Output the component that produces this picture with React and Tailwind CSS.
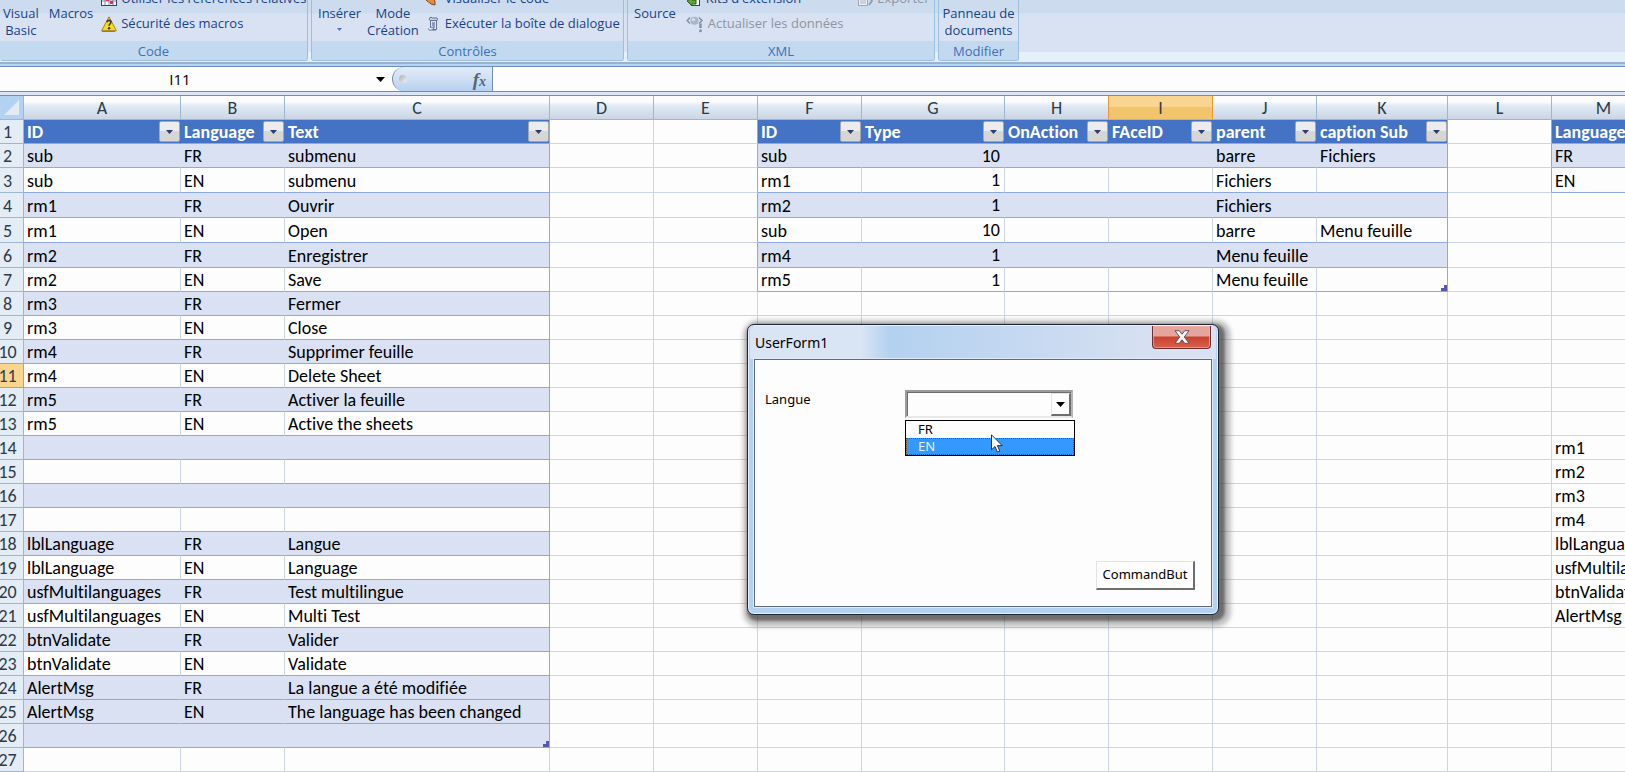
import React from "react";

const COLUMNS = [
  { id: "A", width: 157 },
  { id: "B", width: 104 },
  { id: "C", width: 265 },
  { id: "D", width: 104 },
  { id: "E", width: 104 },
  { id: "F", width: 104 },
  { id: "G", width: 143 },
  { id: "H", width: 104 },
  { id: "I", width: 104 },
  { id: "J", width: 104 },
  { id: "K", width: 131 },
  { id: "L", width: 104 },
  { id: "M", width: 104 },
];

const TABLES = [
  { first: "A", last: "C", rows: 26, plain: (r) => r % 2 === 1 && r !== 25 },
  { first: "F", last: "K", rows: 7, plain: (r) => r % 2 === 1 },
  { first: "M", last: "M", rows: 3, plain: (r) => r % 2 === 1 },
];

const CELLS = {
  1: { A: "ID", B: "Language", C: "Text", F: "ID", G: "Type", H: "OnAction", I: "FAceID", J: "parent", K: "caption Sub", M: "Language" },
  2: { A: "sub", B: "FR", C: "submenu", F: "sub", G: "10", J: "barre", K: "Fichiers", M: "FR" },
  3: { A: "sub", B: "EN", C: "submenu", F: "rm1", G: "1", J: "Fichiers", M: "EN" },
  4: { A: "rm1", B: "FR", C: "Ouvrir", F: "rm2", G: "1", J: "Fichiers" },
  5: { A: "rm1", B: "EN", C: "Open", F: "sub", G: "10", J: "barre", K: "Menu feuille" },
  6: { A: "rm2", B: "FR", C: "Enregistrer", F: "rm4", G: "1", J: "Menu feuille" },
  7: { A: "rm2", B: "EN", C: "Save", F: "rm5", G: "1", J: "Menu feuille" },
  8: { A: "rm3", B: "FR", C: "Fermer" },
  9: { A: "rm3", B: "EN", C: "Close" },
  10: { A: "rm4", B: "FR", C: "Supprimer feuille" },
  11: { A: "rm4", B: "EN", C: "Delete Sheet" },
  12: { A: "rm5", B: "FR", C: "Activer la feuille" },
  13: { A: "rm5", B: "EN", C: "Active the sheets" },
  14: { M: "rm1" },
  15: { M: "rm2" },
  16: { M: "rm3" },
  17: { M: "rm4" },
  18: { A: "lblLanguage", B: "FR", C: "Langue", M: "lblLanguage" },
  19: { A: "lblLanguage", B: "EN", C: "Language", M: "usfMultilanguages" },
  20: { A: "usfMultilanguages", B: "FR", C: "Test multilingue", M: "btnValidate" },
  21: { A: "usfMultilanguages", B: "EN", C: "Multi Test", M: "AlertMsg" },
  22: { A: "btnValidate", B: "FR", C: "Valider" },
  23: { A: "btnValidate", B: "EN", C: "Validate" },
  24: { A: "AlertMsg", B: "FR", C: "La langue a été modifiée" },
  25: { A: "AlertMsg", B: "EN", C: "The language has been changed" },
};

const ROWS = Array.from({ length: 27 }, (_, i) => i + 1);

function tableAt(col, row) {
  return TABLES.find((t) => col >= t.first && col <= t.last && row <= t.rows);
}

function FilterButton({ name }) {
  return (
    <button
      type="button"
      aria-label={`Filtrer ${name}`}
      className="flex h-[21px] w-[21px] shrink-0 items-center justify-center rounded-[2px] border border-[#a3a8b0] bg-linear-to-b from-[#ececec] from-50% to-[#d6d6d4] to-50%"
    >
      <svg width="7" height="4" viewBox="0 0 7 4" aria-hidden="true">
        <path d="M0 0h7L3.5 4z" fill="#2b3a78" />
      </svg>
    </button>
  );
}

function Cell({ col, row }) {
  const text = CELLS[row]?.[col];
  const table = tableAt(col, row);
  const next = String.fromCharCode(col.charCodeAt(0) + 1);
  const nextTable = tableAt(next, row);
  const header = table && row === 1;
  const banded = table && !header && !table.plain(row);

  let right = "border-r-[#ccd5e6]";
  if (table && col === table.last) right = "border-r-[#8ea9db]";
  else if (!table && nextTable) right = "border-r-[#8ea9db]";
  else if (header) right = "border-r-[#4472c4]";
  else if (banded) right = "border-r-[#d9e1f2]";

  const bottom = table ? "border-b-[#8ea9db]" : "border-b-[#ccd5e6]";
  const bg = header ? "bg-[#4472c4]" : banded ? "bg-[#d9e1f2]" : "bg-[#fdfdfd]";
  const corner = table && table.rows === row && col === table.last && col !== "M";
  const base = `relative border-r border-b ${right} ${bottom} ${bg}`;

  if (header) {
    return (
      <th className={`${base} p-0 text-left font-bold text-white`}>
        <div className="flex h-[23px] items-center justify-between pl-[3px]">
          <span className="pt-[2px] leading-[21px] whitespace-nowrap">{text}</span>
          <FilterButton name={text} />
        </div>
      </th>
    );
  }
  return (
    <td className={`${base} pt-[2px] pb-0 ${col === "G" ? "pr-1 pl-0 text-right align-top" : "pr-0 pl-[3px] align-bottom"} leading-[21px] whitespace-nowrap text-black`}>
      {text}
      {corner && (
        <svg className="absolute right-0 bottom-0" width="6" height="6" viewBox="0 0 6 6" aria-hidden="true">
          <path d="M3 0h3v6H0V3h3z" fill="#5457b5" />
        </svg>
      )}
    </td>
  );
}

function Sheet() {
  return (
    <table className="w-[1656px] table-fixed border-separate border-spacing-0 font-['Carlito','Lato','Open_Sans',sans-serif] text-[18px] [font-variant-ligatures:none]">
      <colgroup>
        <col style={{ width: 24 }} />
        {COLUMNS.map((c) => (
          <col key={c.id} style={{ width: c.width }} />
        ))}
      </colgroup>
      <thead>
        <tr className="h-6">
          <th aria-label="Tout sélectionner" className="border-r border-b border-[#9eb6ce] bg-[#b3d1f0] p-0">
            <svg className="ml-1" width="16" height="16" viewBox="0 0 16 16" aria-hidden="true">
              <path d="M15 0v15H0z" fill="#e2eaf4" />
            </svg>
          </th>
          {COLUMNS.map((c) => (
            <th
              key={c.id}
              scope="col"
              className={
                c.id === "I"
                  ? "border-r border-b border-r-[#f29436] border-b-[#9eb6ce] bg-linear-to-b from-[#f9d58f] from-50% to-[#f2c56c] to-50% px-0 pt-[2px] pb-0 leading-[21px] font-normal text-[#333c4a]"
                  : c.id === "H"
                    ? "border-r border-b border-r-[#f29436] border-b-[#9eb6ce] bg-linear-to-b from-[#fcfcfc] from-25% via-[#e2ecf6] via-40% to-[#cbd5e4] px-0 pt-[2px] pb-0 leading-[21px] font-normal text-[#2c3b4a]"
                    : "border-r border-b border-[#9eb6ce] bg-linear-to-b from-[#fcfcfc] from-25% via-[#e2ecf6] via-40% to-[#cbd5e4] px-0 pt-[2px] pb-0 leading-[21px] font-normal text-[#2c3b4a]"
              }
            >
              {c.id}
            </th>
          ))}
        </tr>
      </thead>
      <tbody>
        {ROWS.map((r) => (
          <tr key={r} className={r >= 3 && r <= 6 ? "h-[25px]" : "h-6"}>
            <th
              scope="row"
              className={
                r === 11
                  ? "border-r border-b border-[#f29436] bg-[#f9d58f] px-0 pt-[2px] pb-0 align-bottom leading-[21px] font-normal text-[#333c4a]"
                  : r === 10
                    ? "border-r border-b border-r-[#9eb6ce] border-b-[#f29436] bg-[#e4ecf5] px-0 pt-[2px] pb-0 align-bottom leading-[21px] font-normal text-[#2c3b4a]"
                    : "border-r border-b border-[#9eb6ce] bg-[#e4ecf5] px-0 pt-[2px] pb-0 align-bottom leading-[21px] font-normal text-[#2c3b4a]"
              }
            >
              <div className="flex justify-center pr-2">{r}</div>
            </th>
            {COLUMNS.map((c) => (
              <Cell key={c.id} col={c.id} row={r} />
            ))}
          </tr>
        ))}
      </tbody>
    </table>
  );
}

function GridIcon() {
  return (
    <svg width="16" height="16" viewBox="0 0 16 16" aria-hidden="true">
      <rect x="0.5" y="1.5" width="15" height="13" fill="#fff" stroke="#3a4468" />
      <path d="M1 6h14M1 10h14M4 2v12M8 2v12M12 2v12" stroke="#7d87a5" />
      <path d="M5 7h3v3H5zM9 10h3v3H9z" fill="#d4316a" />
    </svg>
  );
}

function WarningIcon() {
  return (
    <svg width="16" height="16" viewBox="0 0 16 16" aria-hidden="true">
      <path d="M8 0.8 15.4 14.8H.6z" fill="#f7dc1c" stroke="#a8841a" strokeLinejoin="round" />
      <path d="M14 15.3H1" stroke="#8a6a1c" />
      <path d="M6.2 6.2c0-2.400 3.700-2.400 3.700 0 0 1.600-1.800 1.600-1.800 3.600" stroke="#3b3b36" strokeWidth="1.6" fill="none" />
      <circle cx="8.1" cy="12.2" r="1.2" fill="#3b3b36" />
    </svg>
  );
}

function CodeViewIcon() {
  return (
    <svg width="16" height="16" viewBox="0 0 16 16" aria-hidden="true">
      <path d="M1 9l4-4 5 5v4l-4-1z" fill="#e88b3c" stroke="#7c4a2c" />
    </svg>
  );
}

function ScrollIcon() {
  return (
    <svg width="16" height="16" viewBox="0 0 16 16" aria-hidden="true">
      <path d="M5.500 4.500h6v9h-4c2-1 1-3-2-2z" fill="#dfe8f5" stroke="#5d6f92" />
      <path d="M5.500 4.500a1.800 1.600 0 1 1 2-2.500h4.500a1.500 1.500 0 0 1 0 2.500z" fill="#c5d2e6" stroke="#5d6f92" />
      <path d="M7 7h3M7 9h3M8 11h2" stroke="#3e5078" />
      <path d="M3.500 12.500c0 2 2 2 3 1.500h4.500" fill="none" stroke="#5d6f92" />
    </svg>
  );
}

function KitIcon() {
  return (
    <svg width="16" height="16" viewBox="0 0 16 16" aria-hidden="true">
      <rect x="5.500" y="3.500" width="8" height="11" fill="#fff" stroke="#343f5c" />
      <path d="M1 10l5-3v2h4v4H6v2z" fill="#5fa52f" stroke="#2b5a1a" />
    </svg>
  );
}

function RefreshIcon() {
  return (
    <svg width="18" height="18" viewBox="0 0 18 18" aria-hidden="true">
      <path d="M4 2.500 1.200 5.500 4 8.500M13 2.500l3 3-3 3" fill="none" stroke="#7e8ea8" strokeWidth="1.400" />
      <circle cx="8.500" cy="5.800" r="4" fill="#a9b6c9" />
      <circle cx="7.500" cy="4.700" r="1.600" fill="#d6deea" />
      <path d="M14.500 8.500v4.500" stroke="#8494b0" strokeWidth="2.600" />
      <circle cx="14.500" cy="15.800" r="1.500" fill="#8494b0" />
    </svg>
  );
}

function ExportIcon() {
  return (
    <svg width="16" height="16" viewBox="0 0 16 16" aria-hidden="true">
      <path d="M1.500 2.500h9v12h-9z" fill="#eef1f6" stroke="#9aa3b3" />
      <path d="M3 8h6M3 10h6M3 12h6" stroke="#a9b1bf" />
      <path d="M12 14l3-4-3-4" fill="none" stroke="#8a94a6" strokeWidth="1.500" />
    </svg>
  );
}

function BigButton({ lines, arrow }) {
  return (
    <button type="button" className="flex flex-col items-center pt-[5px] leading-[17px] whitespace-nowrap">
      {lines.map((l) => (
        <span key={l}>{l}</span>
      ))}
      {arrow && (
        <svg className="mt-1.5" width="5" height="3" viewBox="0 0 5 3" aria-hidden="true">
          <path d="M0 0h5L2.500 3z" fill="#5473b5" />
        </svg>
      )}
    </button>
  );
}

function SmallButton({ icon, label, disabled }) {
  return (
    <button
      type="button"
      disabled={disabled}
      className="flex h-[25px] shrink-0 items-center gap-1 whitespace-nowrap text-[#15428b] disabled:text-[#8f959f]"
    >
      {icon}
      <span>{label}</span>
    </button>
  );
}

function Group({ title, className, children }) {
  return (
    <section
      aria-label={title}
      className={`flex h-[61px] shrink-0 flex-col overflow-hidden rounded-b-[3px] border-x border-b border-[#9abfdf] bg-[#d9e2f3] ${className}`}
    >
      <div className="flex h-[41px] shrink-0 items-stretch bg-linear-to-b from-[#cddbee] from-25% via-[#c8dcf0] via-30% to-[#d9e2f3] to-35%">{children}</div>
      <h2 className="h-[19px] bg-[#c3d9f0] text-center leading-[20px] text-[#3f6fb4]">{title}</h2>
    </section>
  );
}

function Ribbon() {
  return (
    <div className="flex h-[62px] gap-[3px] overflow-hidden bg-[linear-gradient(to_bottom,#cddbee_10px,#c5dbf0_12px,#d9e2f3_14px,#d9e2f3_52px,#e4f1fb_52px)] font-['Open_Sans',sans-serif] text-[13px] text-[#15428b]">
      <Group title="Code" className="w-[308px] border-l-0">
        <div className="flex gap-2.5 pl-[3px]">
          <BigButton lines={["Visual", "Basic"]} />
          <BigButton lines={["Macros"]} />
        </div>
        <div className="flex flex-col justify-end pb-[5px] pl-2">
          <SmallButton icon={<GridIcon />} label="Utiliser les références relatives" />
          <SmallButton icon={<WarningIcon />} label="Sécurité des macros" />
        </div>
      </Group>
      <Group title="Contrôles" className="w-[313px]">
        <div className="flex gap-1.5 pl-1.5">
          <BigButton lines={["Insérer"]} arrow />
          <BigButton lines={["Mode", "Création"]} />
        </div>
        <div className="flex flex-col justify-end pb-[5px] pl-1.5">
          <SmallButton icon={<CodeViewIcon />} label="Visualiser le code" />
          <SmallButton icon={<ScrollIcon />} label="Exécuter la boîte de dialogue" />
        </div>
      </Group>
      <Group title="XML" className="w-[308px]">
        <div className="flex pl-1.5">
          <BigButton lines={["Source"]} />
        </div>
        <div className="flex flex-col justify-end pb-[5px] pl-2.5">
          <div className="flex justify-between gap-14">
            <SmallButton icon={<KitIcon />} label="Kits d'extension" />
            <SmallButton icon={<ExportIcon />} label="Exporter" disabled />
          </div>
          <SmallButton icon={<RefreshIcon />} label="Actualiser les données" disabled />
        </div>
      </Group>
      <Group title="Modifier" className="w-[81px]">
        <div className="flex flex-1 justify-center">
          <BigButton lines={["Panneau de", "documents"]} />
        </div>
      </Group>
    </div>
  );
}

function FormulaBar() {
  return (
    <div className="border-t-2 border-[#9db0d0] bg-linear-to-b from-[#b9d3f0] from-50% to-[#dbe5f4] to-50% pt-[2px] pb-[3px]">
      <div className="flex h-[26px] border-y border-[#6a8fb8] bg-[#fdfdfd]">
        <div className="flex w-[392px] items-center">
          <input
            aria-label="Zone Nom"
            defaultValue="I11"
            className="w-[372px] bg-transparent pr-3 text-center font-['Open_Sans',sans-serif] text-[15px] text-black outline-none"
          />
          <button type="button" aria-label="Liste des noms" className="flex w-4 justify-center">
            <svg width="9" height="5" viewBox="0 0 9 5" aria-hidden="true">
              <path d="M0 0h9L4.500 5z" fill="#000" />
            </svg>
          </button>
        </div>
        <div className="flex w-[101px] items-center justify-between rounded-l-[12px] border-r border-l border-[#6a8fb8] bg-linear-to-b from-[#e3ecf8] via-[#cfdff3] via-50% to-[#b5d2f2] pr-1.5 pl-1.5">
          <span className="h-2 w-2 rounded-full bg-linear-to-br from-[#a9aeb5] to-[#f4f5f7]" />
          <button
            type="button"
            aria-label="Insérer une fonction"
            className="font-['Liberation_Serif',serif] text-[19px] leading-none font-bold text-[#5b6475] italic"
          >
            f<span className="text-[14px]">x</span>
          </button>
        </div>
        <input aria-label="Barre de formule" className="min-w-0 flex-1 bg-transparent px-2 outline-none" />
      </div>
    </div>
  );
}

function Pointer() {
  return (
    <svg className="absolute top-[13px] left-[85px]" width="12" height="19" viewBox="0 0 12 19" aria-hidden="true">
      <path d="M.5.800v15l3.500-3.300 2.400 5.600 2.400-1-2.400-5.500h4.800z" fill="#fff" stroke="#26304a" />
    </svg>
  );
}

function UserForm() {
  return (
    <div
      role="dialog"
      aria-label="UserForm1"
      className="absolute top-[228px] left-[747px] flex h-[291px] w-[472px] flex-col rounded-[7px] border border-[#1f2633] bg-[#b3d1f0] px-1.5 pb-[7px] font-['Noto_Sans',sans-serif] text-[13px] text-black shadow-[3px_3px_3px_3px_rgba(40,40,40,0.55),4px_4px_4px_8px_rgba(90,90,90,0.35)] inset-ring-1 inset-ring-[#e8f1fb]"
    >
      <div className="-mx-1 mt-px flex h-[33px] shrink-0 items-start justify-between rounded-t-[5px] bg-linear-to-r from-[#d9e4f4] from-24% via-[#b3d1f0] via-30% to-[#d9e1f2] to-90% pl-[5px]">
        <h1 className="text-[14px] leading-[34px]">UserForm1</h1>
        <button
          type="button"
          aria-label="Fermer"
          className="mr-[5px] flex h-[23px] w-[59px] items-center justify-center rounded-b-[4px] border border-t-0 border-[#6b2f33] bg-linear-to-b from-[#e6a59c] from-45% via-[#c9412f] via-50% to-[#d8604c] inset-ring-1 inset-ring-[#f0b8ae]/60"
        >
          <svg width="16" height="14" viewBox="0 0 16 14" aria-hidden="true">
            <path
              d="M1 .700h4.200L8 4.200 10.800.700H15L10.300 7l4.700 6.300h-4.200L8 9.800l-2.800 3.500H1L5.700 7z"
              fill="#f6f6f6"
              stroke="#5f5560"
              strokeLinejoin="round"
            />
          </svg>
        </button>
      </div>
      <div className="flex flex-1 flex-col justify-between border border-[#5c6b7c] bg-[#fdfdfd] ring-1 ring-[#e1ecf8]">
        <div className="flex items-start pt-[30px] pl-2.5">
          <label htmlFor="langue" className="w-[140px] leading-[18px]">
            Langue
          </label>
          <div className="relative">
            <select
              id="langue"
              defaultValue=""
              className="block h-[28px] w-[168px] appearance-none border-2 border-[#9c9c9c] border-r-[#b5b5b5] border-b-[#e8e8e8] bg-[#fdfdfd] inset-shadow-[1px_1px_0_#6e6e6e] outline-none"
            >
              <option value=""></option>
              <option>FR</option>
              <option>EN</option>
            </select>
            <span className="pointer-events-none absolute top-[3px] right-[2px] flex h-[23px] w-[20px] items-center justify-center border-t border-r-2 border-b-2 border-l border-t-[#e3e3e3] border-r-[#6e6e6e] border-b-[#6e6e6e] border-l-[#e3e3e3] bg-[#fdfdfd]">
              <svg width="9" height="5" viewBox="0 0 9 5" aria-hidden="true">
                <path d="M0 0h9L4.500 5z" fill="#000" />
              </svg>
            </span>
            <ul role="listbox" aria-label="Langue" className="absolute top-[30px] left-0 w-[170px] border border-black bg-[#fdfdfd] leading-[17px]">
              <li role="option" aria-selected="false" className="h-[17px] pl-3">
                FR
              </li>
              <li
                role="option"
                aria-selected="true"
                className="h-[17px] bg-[#3399ff] pl-3 text-[#e8f1fb] outline-1 -outline-offset-1 outline-[#7a4a1c] outline-dotted"
              >
                EN
              </li>
              <Pointer />
            </ul>
          </div>
        </div>
        <div className="flex justify-end pr-4 pb-4">
          <button
            type="button"
            className="h-[29px] w-[99px] border-t border-r-2 border-b-2 border-l border-t-[#e3e3e3] border-r-[#6e6e6e] border-b-[#6e6e6e] border-l-[#e3e3e3] bg-[#fdfdfd] whitespace-nowrap"
          >
            CommandBut
          </button>
        </div>
      </div>
    </div>
  );
}

export default function App() {
  return (
    <div className="w-full overflow-hidden bg-[#fdfdfd]">
      <Ribbon />
      <FormulaBar />
      <main className="relative border-t border-[#6a8fb8]">
        <Sheet />
        <UserForm />
      </main>
    </div>
  );
}
